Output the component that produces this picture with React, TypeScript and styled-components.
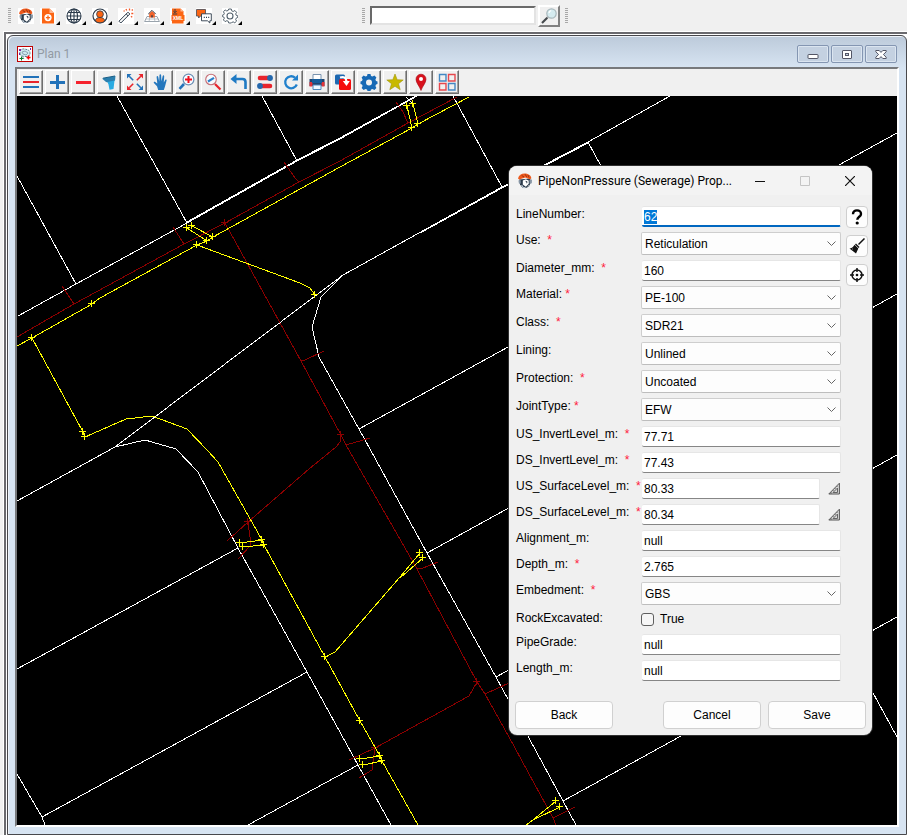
import React, { useEffect, useRef } from "react";
import styled, { createGlobalStyle, css } from "styled-components";

const UI_FONT = '"Liberation Sans", Arial, sans-serif';
const TITLE_FONT = '"Segoe UI", Roboto, "Open Sans", sans-serif';

const GlobalStyle = createGlobalStyle`
  *, *::before, *::after { box-sizing: border-box; }
  body {
    margin: 0;
    background: #f0f0f0;
    font: 12px/15px ${UI_FONT};
    color: #000;
  }
  button, input, select { font: inherit; color: inherit; margin: 0; }
  svg { display: block; }
`;

/* ---------- Application shell ---------- */

const Shell = styled.div`
  display: flex;
  flex-direction: column;
  height: 100vh;
  overflow: hidden;
`;

const MainBar = styled.header`
  display: flex;
  align-items: center;
  flex: none;
  height: 31px;
  padding-left: 8px;
`;

const Grip = styled.span`
  flex: none;
  width: 3px;
  height: 16px;
  background: repeating-linear-gradient(#a8a8a8 0 1px, #f0f0f0 1px 2px);
`;

const MainTools = styled.div`
  display: flex;
  gap: 6px;
  flex: none;
  width: 351px;
  padding-left: 7px;
`;

const MainTool = styled.button<{ $menu?: boolean }>`
  position: relative;
  display: block;
  flex: none;
  width: ${(p) => (p.$menu ? 20 : 16)}px;
  height: 18px;
  padding: 1px 0;
  border: 0;
  background: none;
  svg { background: #fff; }
  ${(p) =>
    p.$menu &&
    css`
      &::after {
        content: "";
        position: absolute;
        right: 0;
        bottom: 0;
        border: 2px solid #000;
        border-top-color: transparent;
        border-left-color: transparent;
      }
    `}
`;

const SearchForm = styled.form`
  display: flex;
  align-items: center;
  gap: 2px;
  margin: 0 5px;
`;

const SearchInput = styled.input`
  width: 166px;
  height: 19px;
  padding: 0 3px;
  border: 2px solid;
  border-color: #696969 #e3e3e3 #e3e3e3 #696969;
  background: #fff;
  outline: none;
`;

const SearchButton = styled.button`
  width: 22px;
  height: 22px;
  padding: 1px;
  border: 2px solid;
  border-color: #fff #808080 #808080 #fff;
  background: #f0f0f0;
`;

const Workspace = styled.main`
  display: flex;
  flex: 1;
  min-height: 0;
  margin-left: 3px;
  border: solid #fff;
  border-width: 1px 0 0 1px;
`;

const WorkspaceEdge = styled.div`
  display: flex;
  flex: 1;
  min-width: 0;
  border: solid #6a6a6e;
  border-width: 2px 0 0 2px;
  padding: 1px 0 0 1px;
  background: #fff;
`;

/* ---------- Plan window ---------- */

const PlanWindow = styled.section`
  display: flex;
  flex-direction: column;
  flex: 1;
  min-width: 0;
  padding: 0 7px 7px;
  border: 1px solid #48484c;
  border-radius: 6px 6px 0 0;
  background: linear-gradient(#bccada 0, #d7e4f2 32px);
  box-shadow: inset 1px 1px 0 #eef3f9;
`;

const PlanTitleBar = styled.div`
  display: flex;
  align-items: center;
  flex: none;
  height: 31px;
  padding: 5px 2px 0;
`;

const PlanTitle = styled.h1`
  flex: 1;
  margin: 0 4px;
  font: 400 12px/16px ${TITLE_FONT};
  color: #929aa3;
`;

const CaptionButtons = styled.div`
  display: flex;
  gap: 2px;
`;

const CaptionButton = styled.button`
  display: grid;
  place-items: center;
  width: 32px;
  height: 18px;
  padding: 0;
  border: 1px solid #8496b2;
  border-radius: 2px;
  background: #c4d1e1;
  box-shadow: inset 0 0 0 1px #dbe5f0;
`;

const PlanBody = styled.div`
  display: flex;
  flex-direction: column;
  flex: 1;
  min-height: 0;
  border: 2px solid;
  border-color: #77797c #fff #fff #77797c;
  background: #f0f0f0;
`;

const PlanTools = styled.div`
  display: flex;
  gap: 2px;
  flex: none;
  height: 27px;
  padding: 1px 2px;
`;

const PlanTool = styled.button`
  display: grid;
  place-items: center;
  width: 24px;
  height: 24px;
  padding: 0 1px 1px 0;
  border: 1px solid;
  border-color: #fff #6e6e6e #6e6e6e #fff;
  background: #f0f0f0;
  box-shadow: inset -1px -1px 0 #a0a0a0;
`;

const Canvas = styled.div`
  position: relative;
  flex: 1;
  min-height: 0;
  overflow: hidden;
  background: #000;
`;

const Drawing = styled.svg`
  width: 100%;
  height: 100%;
  fill: none;
  shape-rendering: crispEdges;
`;

/* ---------- Properties dialog ---------- */

const Dialog = styled.section`
  position: absolute;
  left: 492px;
  top: 70px;
  width: 363px;
  border-radius: 8px;
  background: #f0f0f0;
  box-shadow: 0 0 0 1px #303030;
  overflow: hidden;
`;

const DialogTitleBar = styled.header`
  display: flex;
  align-items: center;
  height: 29px;
  padding-left: 8px;
  background: #f3f3f3;
`;

const DialogTitle = styled.h2`
  flex: 1;
  margin: 0 0 0 5px;
  font: 400 12px/16px ${TITLE_FONT};
  white-space: nowrap;
`;

const DialogCaption = styled.button`
  display: grid;
  place-items: center;
  width: 45px;
  height: 28px;
  padding: 0;
  border: 0;
  background: none;
`;

const DialogForm = styled.form`
  padding: 11px 4px 6px 7px;
`;

const DialogColumns = styled.div`
  display: flex;
  gap: 5px;
`;

const Rows = styled.div`
  display: flex;
  flex-direction: column;
  flex: 1;
  gap: 5px;
`;

const Row = styled.div`
  display: grid;
  grid-template-columns: 125px 1fr;
`;

const Label = styled.label`
  height: 16px;
  padding-top: 1px;
  white-space: pre;
`;

const Required = styled.span`
  color: #ff1c3c;
`;

const TextBox = styled.input`
  display: block;
  flex: 1;
  min-width: 0;
  height: 21px;
  margin: 0 0 0 1px;
  padding: 2px 2px 1px;
  border: solid;
  border-width: 1px 1px 1px 0;
  border-color: #e6e6e6 #e6e6e6 #868686;
  border-radius: 2px;
  background: #fff;
  line-height: 15px;
  outline: none;
  &::selection { background: #0078d7; color: #fff; }
  &:focus { border-bottom: 2px solid #0067c0; padding-bottom: 0; }
`;

const TextCell = styled.div`
  display: flex;
  align-items: center;
`;

const SelectCell = styled.div`
  position: relative;
  svg {
    position: absolute;
    right: 5px;
    top: 9px;
    pointer-events: none;
  }
`;

const SelectBox = styled.select`
  display: block;
  width: 100%;
  height: 23px;
  padding: 1px 18px 0 3px;
  border: 1px solid #cecece;
  border-bottom-color: #bdbdbd;
  border-radius: 2px;
  background: #fdfdfd;
  appearance: none;
  outline: none;
`;

const PickButton = styled.button`
  width: 12px;
  height: 13px;
  margin: 0 1px 0 8px;
  padding: 0;
  border: 0;
  background: none;
`;

const CheckCell = styled.label`
  display: flex;
  align-items: center;
  gap: 6px;
  height: 19px;
  padding-bottom: 1px;
`;

const CheckBox = styled.input`
  width: 13px;
  height: 13px;
  border: 1px solid #5f5f5f;
  border-radius: 3px;
  background: #f6f6f6;
  appearance: none;
  &:checked { background: #0067c0; }
`;

const SideTools = styled.div`
  display: flex;
  flex-direction: column;
  gap: 7px;
`;

const SideTool = styled.button`
  display: grid;
  place-items: center;
  width: 22px;
  height: 22px;
  padding: 0;
  border: 1px solid #cfcfcf;
  border-radius: 4px;
  background: #fdfdfd;
`;

const Footer = styled.footer`
  display: flex;
  gap: 7px;
  margin: 20px 2px 0 -1px;
`;

const PushButton = styled.button<{ $push?: boolean }>`
  width: 98px;
  height: 28px;
  padding: 0;
  margin-right: ${(p) => (p.$push ? "auto" : "0")};
  border: 1px solid #d0d0d0;
  border-radius: 4px;
  background: #fdfdfd;
`;

/* ---------- Icons ---------- */

const Icon = ({ children, size = 16, box = 16 }: { children: React.ReactNode; size?: number; box?: number }) => (
  <svg width={size} height={size} viewBox={`0 0 ${box} ${box}`} fill="none" aria-hidden="true">
    {children}
  </svg>
);

const ORANGE = "#fb6514";
const NAVY = "#2b3a4a";
const BLUE = "#2272b9";
const RED = "#e8242c";

const HelmetIcon = () => (
  <Icon>
    <path d="M2.200 6.500 3 11.600l2.600 3.400 4-.2 2.600-1.600 1.600-4-.6-3.600z" fill={NAVY} />
    <path d="M1 5.400C1.800 2.200 4.400.600 7.600.600c3.400 0 6.200 1.600 6.800 4.600L13 6.200 8.200 4.600 2.200 6.400z" fill="#ee5a1d" />
    <path d="M4.600 2.400 7 4M8 1.200l1.800 2.700M11 2l1 2.600" stroke="#8f3012" strokeWidth=".9" />
    <path d="M5.800 7.600 8.800 6.200l2.900 1.400.1 3.200-3 2.900-3-2.300z" fill="#fff" />
    <path d="m8.600 8.300 1.400.4-.3 1.500" stroke={NAVY} strokeWidth=".9" />
    <path d="M1.400 7.400 3.600 7l.2 3.400-1.800.4zM12.400 7l2.600-.6-.2 3.800-2.200.6" fill="#8796a5" />
    <path d="M4.600 12 6 14.400l2.400.2" stroke="#b9c5d0" strokeWidth="1.200" />
    <path d="M11 13.600 12.400 12" stroke="#dde4ea" />
  </Icon>
);

const mainIcons: { name: string; art: React.ReactNode }[] = [
  {
    name: "New project",
    art: (
      <>
        <path d="M2 .500h7.500L14 5v10.500H2z" fill={ORANGE} />
        <path d="M9.500.500V5H14z" fill="#ffb68f" />
        <circle cx="8" cy="9.600" r="3.600" fill="#fff" />
        <path d="M8 7.500v4.200M5.900 9.600h4.200" stroke={ORANGE} strokeWidth="1.300" />
      </>
    ),
  },
  {
    name: "Web map",
    art: (
      <g stroke={NAVY} strokeWidth="1.100">
        <circle cx="8" cy="8" r="7" />
        <ellipse cx="8" cy="8" rx="3.500" ry="7" />
        <path d="M8 1v14M1 8h14M2.200 4.500h11.600M2.200 11.500h11.600" />
      </g>
    ),
  },
  {
    name: "Account",
    art: (
      <>
        <circle cx="8" cy="8" r="7" stroke={NAVY} strokeWidth="1.200" />
        <path d="M3.200 12.900c.4-2.300 2-3.400 4.800-3.400s4.400 1.100 4.800 3.400a7 7 0 0 1-9.600 0z" fill={ORANGE} stroke={NAVY} strokeWidth=".8" />
        <circle cx="8" cy="6.200" r="3.400" fill={ORANGE} stroke={NAVY} strokeWidth=".8" />
      </>
    ),
  },
  {
    name: "Wizard",
    art: (
      <>
        <path d="m1 13.200 9-9 1.800 1.800-9 9z" fill="#fff" stroke={NAVY} />
        <path d="m8.200 6 1.800 1.800" stroke={NAVY} />
        <path d="m8 1 .7 1.600M11.500.600v2M14.800 1.500l-1 1M13.300 5.500h2M13 8.200l1.200 1M5.600 3h1" stroke="#f2592a" strokeWidth="1.300" />
      </>
    ),
  },
  {
    name: "Site layout",
    art: (
      <>
        <path d="M3 8.500h10l2.400 5H.6z" fill="#fff" stroke="#8d98a3" strokeWidth=".9" />
        <path d="M2 11h12M6 8.500 5 13.500M10 8.500l1 5" stroke="#a4adb5" strokeWidth=".7" />
        <path d="M5.200 5.500V9.500h5.600V5.500L8 3z" fill="#f2642c" />
        <path d="m4.200 6.100 3.800-3.800 3.800 3.800" stroke={NAVY} strokeWidth=".9" />
        <path d="M7.300 9.500V7.200h1.400v2.300z" fill={NAVY} />
      </>
    ),
  },
  {
    name: "XML export",
    art: (
      <>
        <path d="M2 .500h8.500L13.500 3.500V15.500H2z" fill={ORANGE} />
        <path d="M10.500.500v3h3z" fill="#ffb68f" />
        <path d="M1.500 7h13v6h-13z" fill={ORANGE} />
        <path d="M5 1v3.500M3.300 3 5 4.700 6.700 3M2.800 6h4.400" stroke={NAVY} strokeWidth=".9" />
        <text x="8" y="12" textAnchor="middle" fontSize="5" fontWeight="700" fill="#fff">XML</text>
      </>
    ),
  },
  {
    name: "Messages",
    art: (
      <>
        <path d="M.5 1.500h9v6.600H4.500L2.600 10V8.100H.5z" fill={ORANGE} stroke={NAVY} strokeWidth=".7" />
        <path d="M5.500 5.800h9.800v7h-1.500V15l-2.300-2.200h-6z" fill="#fff" stroke={NAVY} strokeWidth=".9" />
        <path d="M7.800 9.400h1M10 9.400h1M12.200 9.400h1" stroke={NAVY} strokeWidth="1.100" />
      </>
    ),
  },
  {
    name: "Settings",
    art: (
      <>
        <path
          d="M6.700 1h2.600l.4 1.800 1.500.7 1.700-1 1.700 1.800-.9 1.600.5 1.400 1.600.5v1.500l-1.600.9-.5 1.300.9 1.600-1.800 1.700-1.600-.9-1.500.6L9.300 15H6.700l-.4-1.700-1.500-.6-1.700.9-1.700-1.700.9-1.600-.5-1.300L.3 8.600V7.200L1.800 6.700l.5-1.400-.9-1.600 1.800-1.700 1.600 1 1.500-.7z"
          stroke="#52606c"
        />
        <circle cx="8" cy="8" r="3" stroke="#52606c" strokeWidth="1.100" />
      </>
    ),
  },
];

const planIcons: { name: string; art: React.ReactNode }[] = [
  {
    name: "Layers",
    art: (
      <>
        <path d="M1 4h16M1 14h16" stroke={BLUE} strokeWidth="2" />
        <path d="M1 9h16" stroke={RED} strokeWidth="2" />
      </>
    ),
  },
  { name: "Add", art: <path d="M9.500 2v14M2 9.500h15" stroke={BLUE} strokeWidth="3" /> },
  { name: "Remove", art: <path d="M2 9.500h15" stroke="#f5222d" strokeWidth="3" /> },
  {
    name: "Filter",
    art: (
      <>
        <path d="M2 5.500 15.500 3 15 7.500l-4.500 2.500L6 9z" fill="#2b7fae" />
        <path d="m7.500 9 7-1.500-1 8.500-4 .8-1-5.300z" fill="#29abe2" />
        <path d="m3 5.200 12-2.200" stroke="#155b85" />
      </>
    ),
  },
  {
    name: "Zoom extents",
    art: (
      <>
        <path d="m7.200 7.200-4-4M10.800 10.800l4 4" stroke={BLUE} strokeWidth="1.600" />
        <path d="m10.800 7.200 4-4M7.200 10.800l-4 4" stroke={RED} strokeWidth="1.600" />
        <path d="M1 1h4.500L1 5.500zM17 17h-4.500l4.500-4.500z" fill={BLUE} />
        <path d="M17 1v4.500L12.500 1zM1 17v-4.500L5.500 17z" fill={RED} />
      </>
    ),
  },
  {
    name: "Pan",
    art: (
      <path
        d="M6.200 17 5 13.300 1.900 10c-.5-1 .6-1.600 1.400-1l2 1.500L4.600 4c0-1.100 1.300-1.200 1.600-.2l1 4.600.3-6.400c.1-1.100 1.500-1.100 1.600 0l.4 6.300 1.200-5.300c.3-1 1.500-.8 1.500.3l-.4 6.200 1.400-2.600c.6-.9 1.600-.5 1.400.6l-1.600 6L11.800 17z"
        fill="#2477bd"
      />
    ),
  },
  {
    name: "Zoom in",
    art: (
      <>
        <path d="m6 11-4.500 4.800" stroke={BLUE} strokeWidth="2.600" />
        <circle cx="10.500" cy="6.500" r="5.400" fill="#f7fbff" stroke="#6b8fb5" strokeWidth="1.200" />
        <path d="M10.500 3v7M7 6.500h7" stroke="#f00f1e" strokeWidth="2" />
      </>
    ),
  },
  {
    name: "Zoom out",
    art: (
      <>
        <path d="m11 11 5.500 5.500" stroke={RED} strokeWidth="2.200" />
        <circle cx="7" cy="6.500" r="5.300" fill="#f7fbff" stroke="#c66d75" strokeWidth="1.100" />
        <path d="m4 8.500 6-3.600" stroke="#2b7fc9" strokeWidth="2.200" />
      </>
    ),
  },
  {
    name: "Undo",
    art: (
      <>
        <path d="M5 6h7.500q3 0 3 3v7" stroke="#1f7ac4" strokeWidth="2.600" />
        <path d="M.5 6 6.500 1v10z" fill="#1f7ac4" />
      </>
    ),
  },
  {
    name: "Toggle snaps",
    art: (
      <>
        <path d="M4 5h10M4 13h10" stroke={RED} strokeWidth="4.600" strokeLinecap="round" />
        <circle cx="14" cy="5" r="2.900" fill="#2368ad" />
        <circle cx="4" cy="13" r="2.900" fill="#2368ad" />
      </>
    ),
  },
  {
    name: "Refresh",
    art: (
      <>
        <path d="M14.800 11.500A6 6 0 1 1 13 4.600" stroke="#2180cc" strokeWidth="2.300" />
        <path d="M16 1.500v6h-6z" fill="#2180cc" />
      </>
    ),
  },
  {
    name: "Print",
    art: (
      <>
        <path d="M5 1.500h8V7H5z" fill="#fff" stroke="#7993ae" />
        <path d="M1.500 6h15v7h-15z" fill="#21456f" />
        <path d="M1.500 9h3v4.500h-3zM13.500 9h3v4.500h-3z" fill="#e1343a" />
        <path d="M4 6h10v4H4z" fill="#165d9b" />
        <path d="M5 12h8v4.500H5z" fill="#eef7ff" stroke="#4f89bc" />
      </>
    ),
  },
  {
    name: "Copy",
    art: (
      <>
        <rect x="1" y="1.500" width="10" height="10" rx="1.500" fill="#1d67b0" />
        <rect x="5" y="6" width="12" height="11" rx="1.500" fill="#f50c0c" />
        <path d="M6 4.500c4-1 6 0 6.500 4" stroke="#fff" strokeWidth="2.200" />
        <path d="M8.800 8h7L12.500 13z" fill="#fff" />
      </>
    ),
  },
  {
    name: "Options",
    art: (
      <>
        <path
          d="M7.500 1h3l.5 2 1.500.6 1.900-1 2 2-1 1.900.6 1.500 1.500.5v2.500l-1.500.5-.6 1.500 1 1.900-2 2-1.900-1-1.500.6-.5 1.500h-3l-.5-1.500-1.500-.6-1.900 1-2-2 1-1.900L2 11.500l-1.500-.5V8.500L2 8l.6-1.500-1-1.900 2-2 1.900 1L7 3z"
          fill="#1769b5"
        />
        <circle cx="9" cy="9.500" r="3" fill="#f0f0f0" />
      </>
    ),
  },
  {
    name: "Favourites",
    art: <path d="m9 1 2.200 5.700 6 .3-4.700 3.700 1.700 6L9 13.300l-5.200 3.400 1.700-6L.8 7l6-.3z" fill="#c8b900" stroke="#9f960b" strokeWidth=".6" />,
  },
  {
    name: "Locate",
    art: (
      <>
        <path d="M9 17.500C7.500 13 4 10 4 6.200a5 5 0 0 1 10 0C14 10 10.500 13 9 17.500z" fill="#d8111c" stroke="#a50b15" strokeWidth=".6" />
        <circle cx="9" cy="6" r="2" fill="#fff" />
      </>
    ),
  },
  {
    name: "Tile windows",
    art: (
      <>
        <path d="M1.500 1.500h6.500v6.500H1.500zM10.500 10.500H17V17h-6.500z" fill="#f0f0f0" stroke="#4387c2" strokeWidth="1.400" />
        <path d="M10.500 1.500H17v6.500h-6.500zM1.500 10.500h6.500V17H1.500z" fill="#f0f0f0" stroke="#e5484e" strokeWidth="1.400" />
      </>
    ),
  },
];

const PlanWindowIcon = () => (
  <Icon>
    <rect x=".5" y=".5" width="15" height="15" fill="#fff" stroke="#c00000" />
    <path d="M3 8c-.8-4 2-5.500 4.500-5s6 1 5.500 4.500-2.500 3-5 3S4 10 3 8z" fill="#cfe8ee" stroke="#5b7f8c" strokeDasharray="2 1" />
    <path d="m5 6 3-1 3 2-2 2-3-1zM5 10l2 3m3-3 1 3" stroke="#8aa7b3" />
    <path d="M2 3h2v2H2zM2 7h1v2H2zM13 2h1v2h-1z" fill="#7a1fa2" />
    <path d="M4.500 10.500v4M2.500 12.500h4" stroke="#0a7a28" />
    <path d="M11.500 9.500v4M9.500 11.500h4" stroke="#f00" strokeWidth="1.300" />
  </Icon>
);

/* ---------- Plan drawing ---------- */

const boundaries = [
  "18,316 76,284 187,223 297,161 340,139 417,96",
  "187,222 297,160 340,138 416,96",
  "17,176 76,284",
  "117,96 187,223",
  "262,96 297,161",
  "406,97 413,104",
  "453,96 502,187",
  "115,447 343,275 502,187 588,142 670,96",
  "420,233 502,188 588,143",
  "588,142 601,166",
  "343,275 321,297 312,327 319,357 359,429 427,553 496,677 563,801 576,825",
  "359,429 897,133",
  "427,553 897,294",
  "496,677 897,455",
  "563,801 897,617",
  "860,669 897,737",
  "17,501 115,447 145,440 176,449 198,472 238,548 307,672 358,765 391,825",
  "17,669 238,548",
  "42,817 307,672",
  "17,774 42,817 45,825",
  "248,825 358,765",
];

const sewers = [
  "17,337 74,304 184,244 225,223 299,182 340,161 408,123 457,97",
  "62,286 74,304",
  "173,227 184,244",
  "284,162 295,178 299,182",
  "396,102 403,112 408,123",
  "225,223 301,361 341,435 346,445 417,569 477,682 485,694 509,737 553,818 556,825",
  "301,361 305,360 324,351",
  "346,445 370,438",
  "417,569 423,568 438,562",
  "485,694 509,683",
  "553,818 575,807",
  "341,435 340,442 336,447 309,469 248,522 227,541",
  "248,522 251,545 238,559",
  "477,682 469,696 375,748 349,760",
  "375,748 372,770 359,778",
];

const sewerNodes = [[225, 223], [341, 435], [248, 522], [477, 682], [375, 748]];

const services = [
  "17,346 32,338 92,304 100,298 197,245 207,241 213,237 340,167 412,128 418,124 469,97",
  "187,228 207,241",
  "192,226 213,237",
  "197,245 300,283 310,288 315,295",
  "32,338 83,432 85,437 126,419 152,416 187,429 207,450 218,462 262,540 264,545 325,657 360,721 380,756 382,761 418,825",
  "407,106 412,128",
  "413,104 418,124",
  "240,543 262,540",
  "243,547 264,545",
  "360,759 380,756",
  "363,765 382,761",
  "420,553 400,577 335,652 325,657",
  "423,558 400,578",
  "556,801 533,820 526,825",
  "560,807 533,820",
];

const serviceNodes = [
  [32, 338], [92, 304], [197, 245], [207, 241], [213, 237], [187, 228], [192, 226], [315, 295],
  [83, 432], [85, 437], [262, 540], [264, 545], [325, 657], [360, 721], [380, 756], [382, 761],
  [407, 106], [413, 104], [412, 128], [418, 124], [240, 543], [243, 547], [360, 759], [363, 765],
  [420, 553], [423, 558], [556, 801], [560, 807],
];

const Layer = ({ lines, nodes = [], color }: { lines: string[]; nodes?: number[][]; color: string }) => (
  <g stroke={color}>
    {lines.map((points) => (
      <polyline key={points} points={points} />
    ))}
    {nodes.map(([x, y]) => (
      <path key={`${x}-${y}`} d={`M${x - 4} ${y - 0.5}h7M${x - 0.5} ${y - 4}v7`} />
    ))}
  </g>
);

const PlanDrawing = () => (
  <Drawing role="img" aria-label="Plan of lots, sewers and services">
    <g transform="translate(-17 -96)">
      <Layer lines={boundaries} color="#fff" />
      <Layer lines={sewers} nodes={sewerNodes} color="#8b0000" />
      <Layer lines={services} nodes={serviceNodes} color="#ff0" />
    </g>
  </Drawing>
);

/* ---------- Form ---------- */

type Field = {
  name: string;
  value: string;
  kind: "text" | "select" | "check" | "pick";
  star?: string;
};

const fields: Field[] = [
  { name: "LineNumber", value: "62", kind: "text" },
  { name: "Use", value: "Reticulation", kind: "select", star: "  " },
  { name: "Diameter_mm", value: "160", kind: "text", star: "  " },
  { name: "Material", value: "PE-100", kind: "select", star: " " },
  { name: "Class", value: "SDR21", kind: "select", star: "  " },
  { name: "Lining", value: "Unlined", kind: "select" },
  { name: "Protection", value: "Uncoated", kind: "select", star: "  " },
  { name: "JointType", value: "EFW", kind: "select", star: " " },
  { name: "US_InvertLevel_m", value: "77.71", kind: "text", star: "  " },
  { name: "DS_InvertLevel_m", value: "77.43", kind: "text", star: "  " },
  { name: "US_SurfaceLevel_m", value: "80.33", kind: "pick", star: "  " },
  { name: "DS_SurfaceLevel_m", value: "80.34", kind: "pick", star: "  " },
  { name: "Alignment_m", value: "null", kind: "text" },
  { name: "Depth_m", value: "2.765", kind: "text", star: "  " },
  { name: "Embedment", value: "GBS", kind: "select", star: "  " },
  { name: "RockExcavated", value: "True", kind: "check" },
  { name: "PipeGrade", value: "null", kind: "text" },
  { name: "Length_m", value: "null", kind: "text" },
];

const FieldControl = ({ field, inputRef }: { field: Field; inputRef?: React.Ref<HTMLInputElement> }) => {
  if (field.kind === "select") {
    return (
      <SelectCell>
        <SelectBox id={field.name} defaultValue={field.value}>
          <option>{field.value}</option>
        </SelectBox>
        <svg width="9" height="6" viewBox="0 0 9 6" fill="none" aria-hidden="true">
          <path d="m.5.500 4 4 4-4" stroke="#666" />
        </svg>
      </SelectCell>
    );
  }
  if (field.kind === "check") {
    return (
      <CheckCell>
        <CheckBox id={field.name} type="checkbox" />
        {field.value}
      </CheckCell>
    );
  }
  return (
    <TextCell>
      <TextBox id={field.name} ref={inputRef} defaultValue={field.value} size={1} />
      {field.kind === "pick" && (
        <PickButton type="button" aria-label={`Sample ${field.name} from surface`}>
          <svg width="12" height="13" viewBox="0 0 12 13" fill="none" aria-hidden="true">
            <path d="M.8 12 11.400 1.200V12z" fill="#d8d8d8" stroke="#555" />
            <path d="M5 10.500 9.500 6v4.500zM3 10v2M5 8v1M7 6v1M9 4v1" stroke="#666" />
          </svg>
        </PickButton>
      )}
    </TextCell>
  );
};

const PropertiesDialog = () => {
  const first = useRef<HTMLInputElement>(null);
  useEffect(() => {
    first.current?.focus();
    first.current?.select();
  }, []);

  return (
    <Dialog role="dialog" aria-labelledby="dialog-title">
      <DialogTitleBar>
        <HelmetIcon />
        <DialogTitle id="dialog-title">PipeNonPressure (Sewerage) Prop...</DialogTitle>
        <DialogCaption aria-label="Minimize">
          <Icon size={10} box={10}><path d="M0 5.500h10" stroke="#111" /></Icon>
        </DialogCaption>
        <DialogCaption aria-label="Maximize" disabled>
          <Icon size={10} box={10}><path d="M.5.500h9v9h-9z" stroke="#c4c4c4" /></Icon>
        </DialogCaption>
        <DialogCaption aria-label="Close">
          <Icon size={10} box={10}><path d="m0 0 10 10M10 0 0 10" stroke="#111" strokeWidth="1.200" /></Icon>
        </DialogCaption>
      </DialogTitleBar>
      <DialogForm onSubmit={(e) => e.preventDefault()}>
        <DialogColumns>
          <Rows>
            {fields.map((field, i) => (
              <Row key={field.name}>
                <Label htmlFor={field.name}>
                  {field.name}:
                  {field.star !== undefined && <Required>{`${field.star}*`}</Required>}
                </Label>
                <FieldControl field={field} inputRef={i === 0 ? first : undefined} />
              </Row>
            ))}
          </Rows>
          <SideTools>
            <SideTool type="button" aria-label="Help">
              <Icon>
                <path d="M4 5.200C4 2.600 5.600 1.400 8 1.400s4 1.300 4 3.500c0 2.800-3.700 2.900-3.700 5.900" stroke="#000" strokeWidth="2.400" />
                <circle cx="8.200" cy="14" r="1.600" fill="#000" />
              </Icon>
            </SideTool>
            <SideTool type="button" aria-label="Clear">
              <Icon>
                <path d="m9.500 6.500 6-6" stroke="#111" strokeWidth="1.500" />
                <path d="m7 5.500 3.500 3.500-1 1-3.500-3.500z" fill="#111" />
                <path d="M5.600 6.800 9.300 10.500 7 15.500.500 10.500c2-.2 3.700-1.200 5.100-3.700z" fill="#111" />
                <path d="m3 11.400 1-.8" stroke="#fff" strokeWidth=".5" />
              </Icon>
            </SideTool>
            <SideTool type="button" aria-label="Locate on plan">
              <Icon>
                <circle cx="8" cy="8" r="5" stroke="#111" strokeWidth="1.500" />
                <circle cx="8" cy="8" r="1.300" fill="#111" />
                <path d="M8 1v4M8 11v4M1 8h4M11 8h4" stroke="#111" strokeWidth="1.500" />
              </Icon>
            </SideTool>
          </SideTools>
        </DialogColumns>
        <Footer>
          <PushButton type="button" $push>Back</PushButton>
          <PushButton type="button">Cancel</PushButton>
          <PushButton type="submit">Save</PushButton>
        </Footer>
      </DialogForm>
    </Dialog>
  );
};

export default function App() {
  return (
    <Shell>
      <GlobalStyle />
      <MainBar>
        <Grip />
        <MainTools>
          <MainTool aria-label="Home"><HelmetIcon /></MainTool>
          {mainIcons.map((icon) => (
            <MainTool key={icon.name} aria-label={icon.name} $menu>
              <Icon>{icon.art}</Icon>
            </MainTool>
          ))}
        </MainTools>
        <Grip />
        <SearchForm onSubmit={(e) => e.preventDefault()}>
          <SearchInput type="text" aria-label="Search" />
          <SearchButton aria-label="Search">
            <Icon>
              <path d="m1 15 5.500-5.500" stroke="#44484c" strokeWidth="2.200" />
              <path d="m6 10 2-2" stroke="#999" strokeWidth="1.500" />
              <circle cx="10.500" cy="5.500" r="4.700" fill="#d5ebef" stroke="#a9b8bc" strokeWidth="1.200" />
              <path d="M8 5q.3-2 2.200-2.300" stroke="#fff" strokeWidth="1.300" />
            </Icon>
          </SearchButton>
        </SearchForm>
        <Grip />
      </MainBar>
      <Workspace>
        <WorkspaceEdge>
          <PlanWindow>
            <PlanTitleBar>
              <PlanWindowIcon />
              <PlanTitle>Plan 1</PlanTitle>
              <CaptionButtons>
                <CaptionButton aria-label="Minimize plan">
                  <svg width="12" height="9" viewBox="0 0 12 9" aria-hidden="true">
                    <rect x="1" y="4.500" width="10" height="4" rx=".5" fill="#fff" stroke="#535666" />
                  </svg>
                </CaptionButton>
                <CaptionButton aria-label="Restore plan">
                  <svg width="12" height="9" viewBox="0 0 12 9" aria-hidden="true">
                    <rect x="1.500" y=".5" width="9" height="8" rx=".5" fill="#fff" stroke="#535666" />
                    <rect x="4.500" y="3.500" width="3" height="2" fill="#c4d1e1" stroke="#535666" />
                  </svg>
                </CaptionButton>
                <CaptionButton aria-label="Close plan">
                  <svg width="12" height="9" viewBox="0 0 12 9" aria-hidden="true">
                    <path d="M.8.500h3.400L6 2.400 7.800.500h3.400v1.300L8.400 4.500l2.800 2.700v1.300H7.800L6 6.600 4.200 8.500H.8V7.200l2.800-2.700L.8 1.800z" fill="#fff" stroke="#535666" />
                  </svg>
                </CaptionButton>
              </CaptionButtons>
            </PlanTitleBar>
            <PlanBody>
              <PlanTools role="toolbar" aria-label="Plan tools">
                {planIcons.map((icon) => (
                  <PlanTool key={icon.name} aria-label={icon.name}>
                    <Icon size={18} box={18}>{icon.art}</Icon>
                  </PlanTool>
                ))}
              </PlanTools>
              <Canvas>
                <PlanDrawing />
                <PropertiesDialog />
              </Canvas>
            </PlanBody>
          </PlanWindow>
        </WorkspaceEdge>
      </Workspace>
    </Shell>
  );
}
